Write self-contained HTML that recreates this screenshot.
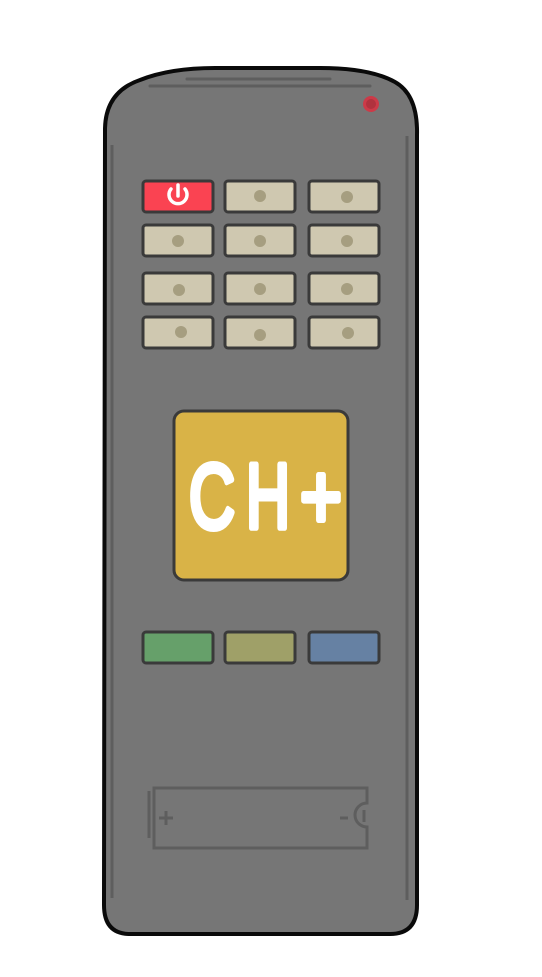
<!DOCTYPE html>
<html><head><style>html,body{margin:0;padding:0;background:#fff;width:542px;height:977px;overflow:hidden}</style></head>
<body>
<svg width="542" height="977" viewBox="0 0 542 977" xmlns="http://www.w3.org/2000/svg">
<path d="M105 130 Q105 92 140 80 Q170 68 215 68 L320 68 Q370 68 395 82 Q418 95 417 135 L417 905 Q417 934 390 934 L130 934 Q104 934 104 905 Z" fill="#767676" stroke="#0a0a0a" stroke-width="4"/>
<line x1="187" y1="79" x2="330" y2="79" stroke="#5e5e5e" stroke-width="3" stroke-linecap="round"/>
<line x1="150" y1="86" x2="370" y2="86" stroke="#5e5e5e" stroke-width="3" stroke-linecap="round"/>
<circle cx="371" cy="104" r="8" fill="#cc3a48"/><circle cx="371" cy="104" r="5" fill="#b0323e"/>
<line x1="112" y1="145" x2="112" y2="898" stroke="#5e5e5e" stroke-width="3"/>
<line x1="407" y1="136" x2="407" y2="900" stroke="#5e5e5e" stroke-width="3"/>
<g stroke="#3a3a3a" stroke-width="3">
<rect x="143" y="181" width="70" height="31" rx="3" fill="#fa4352"/>
<rect x="225" y="181" width="70" height="31" rx="3" fill="#cfc8b0"/>
<rect x="309" y="181" width="70" height="31" rx="3" fill="#cfc8b0"/>
<rect x="143" y="225" width="70" height="31" rx="3" fill="#cfc8b0"/>
<rect x="225" y="225" width="70" height="31" rx="3" fill="#cfc8b0"/>
<rect x="309" y="225" width="70" height="31" rx="3" fill="#cfc8b0"/>
<rect x="143" y="273" width="70" height="31" rx="3" fill="#cfc8b0"/>
<rect x="225" y="273" width="70" height="31" rx="3" fill="#cfc8b0"/>
<rect x="309" y="273" width="70" height="31" rx="3" fill="#cfc8b0"/>
<rect x="143" y="317" width="70" height="31" rx="3" fill="#cfc8b0"/>
<rect x="225" y="317" width="70" height="31" rx="3" fill="#cfc8b0"/>
<rect x="309" y="317" width="70" height="31" rx="3" fill="#cfc8b0"/>
<rect x="174" y="411" width="174" height="169" rx="10" fill="#d9b347"/>
<rect x="143" y="632" width="70" height="31" rx="3" fill="#66a06a"/>
<rect x="225" y="632" width="70" height="31" rx="3" fill="#9fa068"/>
<rect x="309" y="632" width="70" height="31" rx="3" fill="#6681a3"/>
</g>
<g fill="#a69e80">
<circle cx="260" cy="196" r="6"/><circle cx="347" cy="197" r="6"/>
<circle cx="178" cy="241" r="6"/><circle cx="260" cy="241" r="6"/><circle cx="347" cy="241" r="6"/>
<circle cx="179" cy="290" r="6"/><circle cx="260" cy="289" r="6"/><circle cx="347" cy="289" r="6"/>
<circle cx="181" cy="332" r="6"/><circle cx="260" cy="335" r="6"/><circle cx="348" cy="333" r="6"/>
</g>
<path d="M171 189 A9 9 0 1 0 185 189" fill="none" stroke="#fff" stroke-width="3.5" stroke-linecap="round"/>
<line x1="178" y1="185" x2="178" y2="196" stroke="#fff" stroke-width="3.5" stroke-linecap="round"/>
<g font-family="Liberation Sans, sans-serif" font-size="92" fill="#fff" stroke="#fff" stroke-width="6" stroke-linejoin="round">
<text x="189" y="528" textLength="46" lengthAdjust="spacingAndGlyphs">C</text>
<text x="246" y="528" textLength="44" lengthAdjust="spacingAndGlyphs">H</text>
<text x="300" y="528" textLength="42" lengthAdjust="spacingAndGlyphs">+</text>
</g>
<g stroke="#5e5e5e" stroke-width="3" fill="none">
<path d="M154 788 L367 788 L367 803 A12 12 0 0 0 367 827 L367 848 L154 848 Z"/>
<line x1="149" y1="791" x2="149" y2="838"/>
<line x1="159" y1="818" x2="173" y2="818"/><line x1="166" y1="811" x2="166" y2="825"/>
<line x1="340" y1="818" x2="348" y2="818"/>
<line x1="364" y1="810" x2="364" y2="822"/>
</g>
</svg>
</body></html>
